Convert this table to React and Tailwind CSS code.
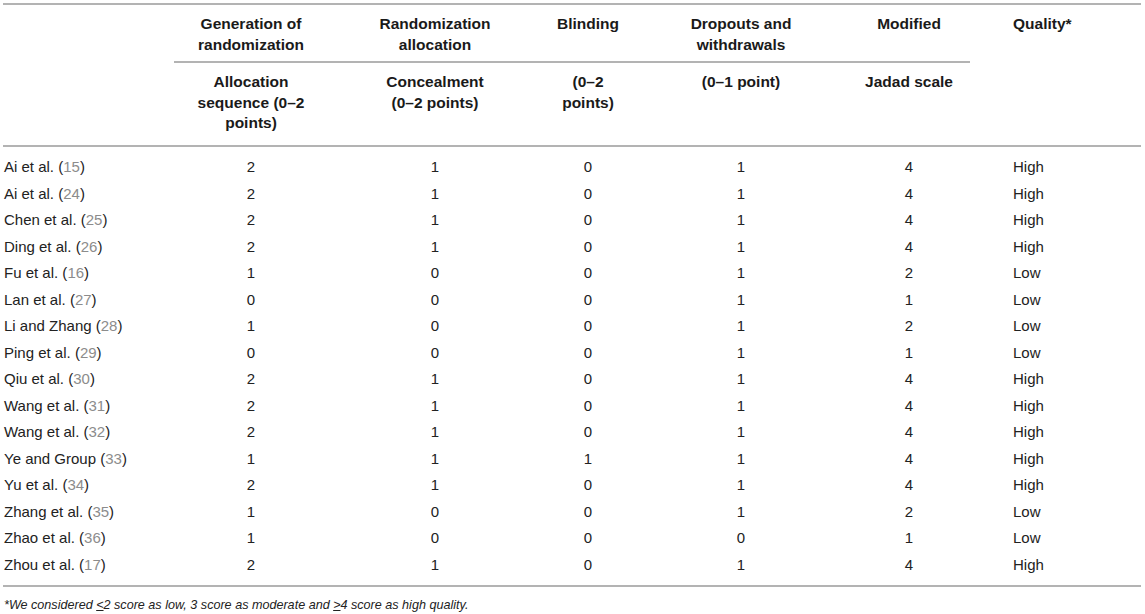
import React from "react";

const rows = [
  ["Ai et al.", "15", 2, 1, 0, 1, 4, "High"],
  ["Ai et al.", "24", 2, 1, 0, 1, 4, "High"],
  ["Chen et al.", "25", 2, 1, 0, 1, 4, "High"],
  ["Ding et al.", "26", 2, 1, 0, 1, 4, "High"],
  ["Fu et al.", "16", 1, 0, 0, 1, 2, "Low"],
  ["Lan et al.", "27", 0, 0, 0, 1, 1, "Low"],
  ["Li and Zhang", "28", 1, 0, 0, 1, 2, "Low"],
  ["Ping et al.", "29", 0, 0, 0, 1, 1, "Low"],
  ["Qiu et al.", "30", 2, 1, 0, 1, 4, "High"],
  ["Wang et al.", "31", 2, 1, 0, 1, 4, "High"],
  ["Wang et al.", "32", 2, 1, 0, 1, 4, "High"],
  ["Ye and Group", "33", 1, 1, 1, 1, 4, "High"],
  ["Yu et al.", "34", 2, 1, 0, 1, 4, "High"],
  ["Zhang et al.", "35", 1, 0, 0, 1, 2, "Low"],
  ["Zhao et al.", "36", 1, 0, 0, 0, 1, "Low"],
  ["Zhou et al.", "17", 2, 1, 0, 1, 4, "High"],
];

const font = { fontFamily: '"Liberation Sans", Arial, sans-serif' };

const h1 =
  "pt-[9px] pb-[6px] px-0 text-center align-top font-bold border-b-2 border-solid border-[#b3b3b3]";
const h2 =
  "pt-[9px] pb-[11.5px] px-0 text-center align-top font-bold border-b-2 border-solid border-[#b3b3b3]";

export default function App() {
  const last = rows.length - 1;
  return (
    <div className="w-[1145px] h-[614px] bg-white text-[#222] overflow-hidden" style={font}>
      <div className="pt-[3px] pl-[3px] w-[1141px]">
        <div className="w-[1138px] border-t-2 border-solid border-[#b3b3b3]">
          <table className="w-[1138px] table-fixed border-separate border-spacing-0">
            <colgroup>
              <col className="w-[171px]" />
              <col className="w-[154px]" />
              <col className="w-[214px]" />
              <col className="w-[92px]" />
              <col className="w-[214px]" />
              <col className="w-[122px]" />
              <col className="w-[171px]" />
            </colgroup>
            <thead className="text-[15.5px] leading-[20.5px] text-[#1a1a1a]">
              <tr>
                <th rowSpan={2} className="p-0 border-b-2 border-solid border-[#b3b3b3]"></th>
                <th className={h1}>
                  Generation of
                  <br />
                  randomization
                </th>
                <th className={h1}>
                  Randomization
                  <br />
                  allocation
                </th>
                <th className={h1}>Blinding</th>
                <th className={h1}>
                  Dropouts and
                  <br />
                  withdrawals
                </th>
                <th className={h1}>Modified</th>
                <th
                  rowSpan={2}
                  className="pt-[9px] pl-[43px] pr-0 text-left align-top font-bold border-b-2 border-solid border-[#b3b3b3]"
                >
                  Quality*
                </th>
              </tr>
              <tr>
                <th className={h2}>
                  Allocation
                  <br />
                  sequence (0–2
                  <br />
                  points)
                </th>
                <th className={h2}>
                  Concealment
                  <br />
                  (0–2 points)
                </th>
                <th className={h2}>
                  (0–2
                  <br />
                  points)
                </th>
                <th className={h2}>(0–1 point)</th>
                <th className={h2}>Jadad scale</th>
              </tr>
            </thead>
            <tbody className="text-[15px]">
              {rows.map((r, i) => {
                const lh = i % 2 === 0 ? "leading-[26px]" : "leading-[27px]";
                const pad = `${lh} ${i === 0 ? "pt-[7px]" : ""} ${
                  i === last ? "pb-[7px] border-b-2 border-solid border-[#b3b3b3]" : ""
                }`;
                return (
                  <tr key={i}>
                    <td className={`pl-[1px] whitespace-nowrap ${pad}`}>
                      {r[0]} (<span className="text-[#8c8c8c]">{r[1]}</span>)
                    </td>
                    {[2, 3, 4, 5, 6].map((k) => (
                      <td key={k} className={`text-center ${pad}`}>
                        {r[k]}
                      </td>
                    ))}
                    <td className={`pl-[43px] ${pad}`}>{r[7]}</td>
                  </tr>
                );
              })}
            </tbody>
          </table>
        </div>
        <p className="mt-[10px] pl-[1px] text-[12.6px] leading-[16px] italic text-[#222]">
          *We considered <span className="underline">&lt;</span>2 score as low, 3 score as moderate and{" "}
          <span className="underline">&gt;</span>4 score as high quality.
        </p>
      </div>
    </div>
  );
}
